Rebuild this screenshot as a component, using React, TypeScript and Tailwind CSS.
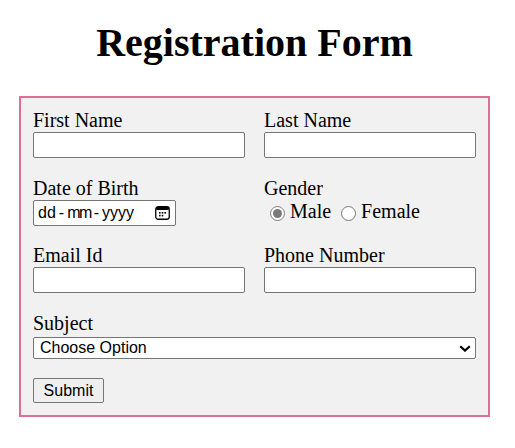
import React, { useState } from "react";

const serif = { fontFamily: '"Liberation Serif", "Times New Roman", serif' };
const sans = { fontFamily: '"Liberation Sans", Arial, sans-serif' };

const labelCls = "block text-[20px] leading-[23px] text-black";
const inputCls =
  "block w-full h-[26px] bg-white border border-[#767676] rounded-[2px] px-[2px] text-[16px] outline-none";

const CalendarIcon: React.FC = () => (
  <svg width="15" height="14" viewBox="0 0 15 14" fill="none">
    <rect x="0.75" y="0.75" width="13.5" height="12.5" rx="2.5" stroke="#000" strokeWidth="1.3" />
    <rect x="1" y="1" width="13" height="3" rx="1.5" fill="#000" />
    <rect x="4" y="6" width="1.6" height="1.6" fill="#000" />
    <rect x="6.7" y="6" width="1.6" height="1.6" fill="#000" />
    <rect x="9.4" y="6" width="1.6" height="1.6" fill="#000" />
    <rect x="4" y="8.8" width="1.6" height="1.6" fill="#000" />
    <rect x="6.7" y="8.8" width="1.6" height="1.6" fill="#000" />
  </svg>
);

const App: React.FC = () => {
  const [gender, setGender] = useState("male");

  return (
    <div className="min-h-screen bg-white" style={serif}>
      <div className="ml-[19px] w-[471px] pt-[20px]">
        <h1 className="text-center text-[40px] leading-[46px] font-bold text-black mb-[30px]">
          Registration Form
        </h1>

        <form
          onSubmit={(e) => e.preventDefault()}
          className="border-2 border-[#db7093] bg-[#f1f1f1] px-[12px] pt-[11px] pb-[12px]"
        >
          {/* name row */}
          <div className="grid grid-cols-2 gap-x-[19px]">
            <div>
              <label className={labelCls}>First Name</label>
              <input type="text" className={inputCls} />
            </div>
            <div>
              <label className={labelCls}>Last Name</label>
              <input type="text" className={inputCls} />
            </div>
          </div>

          {/* birth + gender */}
          <div className="grid grid-cols-2 gap-x-[19px] mt-[19px]">
            <div>
              <label className={labelCls}>Date of Birth</label>
              <div className="flex items-center w-[143px] h-[26px] bg-white border border-[#767676] rounded-[2px] pl-[4px] pr-[5px]">
                <span className="flex items-center text-[16px] text-black" style={sans}>
                  <span>dd</span>
                  <span className="mx-[3px]">-</span>
                  <span className="tracking-[-1.5px]">mm</span>
                  <span className="mx-[3px]">-</span>
                  <span>yyyy</span>
                </span>
                <span className="ml-auto flex items-center">
                  <CalendarIcon />
                </span>
              </div>
            </div>
            <div>
              <label className={labelCls}>Gender</label>
              <div className="flex items-center h-[23px] text-[20px] leading-[23px] text-black">
                <input
                  type="radio"
                  name="gender"
                  checked={gender === "male"}
                  onChange={() => setGender("male")}
                  className="ml-[6px] mr-[5px] mt-[3px] w-[15px] h-[15px] accent-[#7a7a7a]"
                />
                <span>Male</span>
                <input
                  type="radio"
                  name="gender"
                  checked={gender === "female"}
                  onChange={() => setGender("female")}
                  className="ml-[10px] mr-[5px] mt-[3px] w-[15px] h-[15px] accent-[#7a7a7a]"
                />
                <span>Female</span>
              </div>
            </div>
          </div>

          {/* contact row */}
          <div className="grid grid-cols-2 gap-x-[19px] mt-[18px]">
            <div>
              <label className={labelCls}>Email Id</label>
              <input type="email" className={inputCls} />
            </div>
            <div>
              <label className={labelCls}>Phone Number</label>
              <input type="tel" className={inputCls} />
            </div>
          </div>

          {/* subject */}
          <div className="mt-[19px]">
            <label className={labelCls}>Subject</label>
            <div className="relative mt-[2px]">
              <select
                className="block w-full h-[22px] appearance-none bg-white border border-[#767676] rounded-[2px] pl-[6px] text-[16px] leading-[20px] text-black outline-none"
                style={sans}
                defaultValue=""
              >
                <option value="">Choose Option</option>
                <option value="math">Math</option>
                <option value="physics">Physics</option>
                <option value="english">English</option>
              </select>
              <svg
                className="absolute right-[5px] top-[8px] pointer-events-none"
                width="12"
                height="7"
                viewBox="0 0 12 7"
                fill="none"
              >
                <path d="M1.2 1.2 L6 5.6 L10.8 1.2" stroke="#000" strokeWidth="2.2" />
              </svg>
            </div>
          </div>

          <button
            type="submit"
            className="block mt-[19px] w-[71px] h-[25px] bg-[#efefef] border border-[#767676] rounded-[2px] text-[16px] text-black"
            style={sans}
          >
            Submit
          </button>
        </form>
      </div>
    </div>
  );
};

export default App;
